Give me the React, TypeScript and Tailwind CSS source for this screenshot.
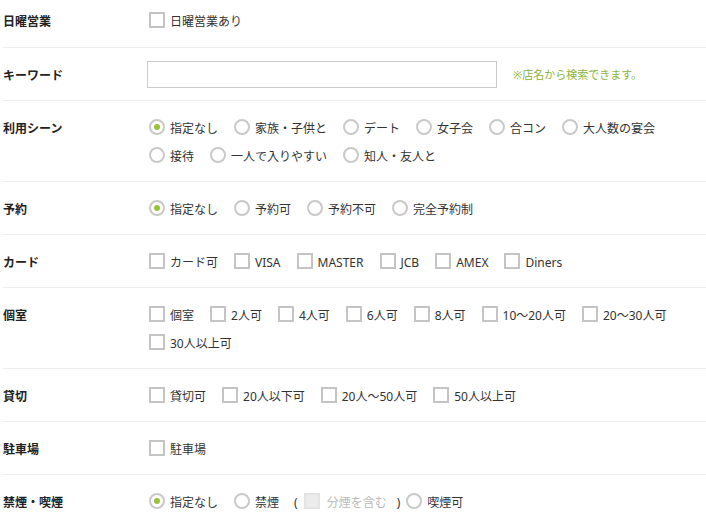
import { ReactNode } from "react";

type Opt = { label: string; checked?: boolean };

function Radio({ checked }: { checked?: boolean }) {
  return (
    <span className="flex items-center justify-center w-4 h-4 rounded-full border-2 border-[#c9c9c9] bg-white shrink-0">
      {checked && <span className="w-[6px] h-[6px] rounded-full bg-[#99c23a]" />}
    </span>
  );
}

function Check({ disabled }: { disabled?: boolean }) {
  return (
    <span
      className={
        disabled
          ? "block w-4 h-4 border-2 border-[#e4e4e4] bg-[#ececec] shrink-0"
          : "block w-4 h-4 border-2 border-[#c4c4c4] bg-white shrink-0"
      }
    />
  );
}

function Item({ opt, type }: { opt: Opt; type: "radio" | "check" }) {
  return (
    <div className="flex items-center h-7 pl-[2px] mr-[14px] shrink-0">
      {type === "radio" ? <Radio checked={opt.checked} /> : <Check />}
      <span className="ml-[5px] pt-[3px] whitespace-nowrap">{opt.label}</span>
    </div>
  );
}

function Row({ label, children, first }: { label: string; children: ReactNode; first?: boolean }) {
  return (
    <div
      className={
        "flex border-b border-[#ededed] " + (first ? "pt-[6px] pb-[13px]" : "py-3")
      }
    >
      <div className="w-[144px] shrink-0 h-7 pt-[3px] flex items-center font-bold text-[#222]">{label}</div>
      <div className="flex-1">{children}</div>
    </div>
  );
}

function Line({ opts, type }: { opts: Opt[]; type: "radio" | "check" }) {
  return (
    <div className="flex flex-wrap">
      {opts.map((o) => (
        <Item key={o.label} opt={o} type={type} />
      ))}
    </div>
  );
}

export default function App() {
  return (
    <div
      className="w-[706px] h-[520px] overflow-hidden bg-white pl-[3px] text-[12px] text-[#333]"
      style={{ fontFamily: '"Noto Sans", "Noto Sans CJK JP", sans-serif' }}
    >
      <Row label="日曜営業" first>
        <Line type="check" opts={[{ label: "日曜営業あり" }]} />
      </Row>

      <Row label="キーワード">
        <div className="flex items-center h-7">
          <input
            type="text"
            className="w-[350px] h-[27px] border border-[#cccccc] bg-white outline-none px-2"
          />
          <span className="ml-4 pt-[3px] text-[11px] text-[#8ab43c]">※店名から検索できます。</span>
        </div>
      </Row>

      <Row label="利用シーン">
        <Line
          type="radio"
          opts={[
            { label: "指定なし", checked: true },
            { label: "家族・子供と" },
            { label: "デート" },
            { label: "女子会" },
            { label: "合コン" },
            { label: "大人数の宴会" },
            { label: "接待" },
            { label: "一人で入りやすい" },
            { label: "知人・友人と" },
          ]}
        />
      </Row>

      <Row label="予約">
        <Line
          type="radio"
          opts={[
            { label: "指定なし", checked: true },
            { label: "予約可" },
            { label: "予約不可" },
            { label: "完全予約制" },
          ]}
        />
      </Row>

      <Row label="カード">
        <Line
          type="check"
          opts={[
            { label: "カード可" },
            { label: "VISA" },
            { label: "MASTER" },
            { label: "JCB" },
            { label: "AMEX" },
            { label: "Diners" },
          ]}
        />
      </Row>

      <Row label="個室">
        <Line
          type="check"
          opts={[
            { label: "個室" },
            { label: "2人可" },
            { label: "4人可" },
            { label: "6人可" },
            { label: "8人可" },
            { label: "10〜20人可" },
            { label: "20〜30人可" },
            { label: "30人以上可" },
          ]}
        />
      </Row>

      <Row label="貸切">
        <Line
          type="check"
          opts={[
            { label: "貸切可" },
            { label: "20人以下可" },
            { label: "20人〜50人可" },
            { label: "50人以上可" },
          ]}
        />
      </Row>

      <Row label="駐車場">
        <Line type="check" opts={[{ label: "駐車場" }]} />
      </Row>

      <Row label="禁煙・喫煙">
        <div className="flex items-center h-7">
          <Item type="radio" opt={{ label: "指定なし", checked: true }} />
          <div className="flex items-center pl-[2px]">
            <Radio />
            <span className="ml-[5px] pt-[3px]">禁煙</span>
          </div>
          <span className="ml-[15px] mr-[6px] pt-[3px]">(</span>
          <Check disabled />
          <span className="ml-[7px] pt-[3px] text-[#bbbbbb]">分煙を含む</span>
          <span className="ml-[10px] mr-[6px] pt-[3px]">)</span>
          <Radio />
          <span className="ml-[5px] pt-[3px]">喫煙可</span>
        </div>
      </Row>
    </div>
  );
}
